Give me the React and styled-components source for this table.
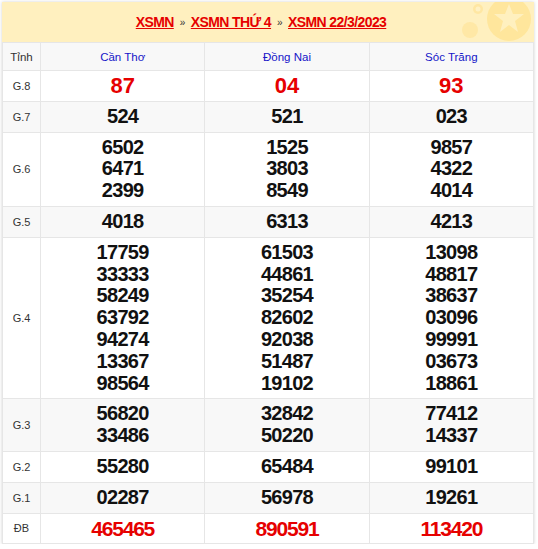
import styled, { createGlobalStyle } from 'styled-components';

const GlobalStyle = createGlobalStyle`
  html, body {
    margin: 0;
    padding: 0;
    background: #ffffff;
    font-family: 'Liberation Sans', Arial, sans-serif;
  }
`;

const Card = styled.div`
  margin: 2px 4px 0 2px;
  width: 532px;
  box-shadow: 0 0 3px rgba(0, 0, 0, 0.18);
  background: #fff;
`;

const Title = styled.div`
  position: relative;
  height: 40px;
  background: #fff0bf;
  display: flex;
  align-items: center;
  justify-content: center;
  padding-right: 14px;
  overflow: hidden;
  font-size: 14px;
  letter-spacing: -0.6px;
  font-weight: 700;
`;

const Crumb = styled.a`
  color: #e60000;
  text-decoration: underline;
`;

const Sep = styled.span`
  color: #333;
  font-size: 10px;
  font-weight: 400;
  margin: 0 6px;
`;

const Deco = styled.svg`
  position: absolute;
  right: 0;
  top: 0;
`;

const Table = styled.table`
  width: 100%;
  border-collapse: collapse;
  table-layout: fixed;
`;

const Row = styled.tr`
  background: ${({ $shade }) => ($shade ? '#f8f8f8' : '#ffffff')};
`;

const Cell = styled.td`
  border: 1px solid #e6e6e6;
  text-align: center;
  vertical-align: middle;
  padding: 4px 0;
  line-height: 21.8px;
  font-size: ${({ $size }) => $size || '20px'};
  letter-spacing: ${({ $spacing }) => $spacing || '-0.7px'};
  font-weight: 700;
  color: ${({ $red }) => ($red ? '#e60000' : '#111')};
`;

const Label = styled.td`
  border: 1px solid #e6e6e6;
  width: 37px;
  text-align: center;
  font-size: 11px;
  color: #333;
  padding: 0;
`;

const HeadCell = styled.th`
  border: 1px solid #e6e6e6;
  height: 27px;
  padding: 0;
  font-size: 11.5px;
  font-weight: 400;
  color: ${({ $blue }) => ($blue ? '#1515c8' : '#333')};
`;

const Num = styled.div``;

const provinces = ['Cần Thơ', 'Đồng Nai', 'Sóc Trăng'];

const rows = [
  { label: 'G.8', size: '22px', spacing: '0', red: true, values: [['87'], ['04'], ['93']] },
  { label: 'G.7', values: [['524'], ['521'], ['023']] },
  {
    label: 'G.6',
    values: [
      ['6502', '6471', '2399'],
      ['1525', '3803', '8549'],
      ['9857', '4322', '4014'],
    ],
  },
  { label: 'G.5', values: [['4018'], ['6313'], ['4213']] },
  {
    label: 'G.4',
    values: [
      ['17759', '33333', '58249', '63792', '94274', '13367', '98564'],
      ['61503', '44861', '35254', '82602', '92038', '51487', '19102'],
      ['13098', '48817', '38637', '03096', '99991', '03673', '18861'],
    ],
  },
  {
    label: 'G.3',
    values: [
      ['56820', '33486'],
      ['32842', '50220'],
      ['77412', '14337'],
    ],
  },
  { label: 'G.2', values: [['55280'], ['65484'], ['99101']] },
  { label: 'G.1', values: [['02287'], ['56978'], ['19261']] },
  {
    label: 'ĐB',
    size: '21px',
    spacing: '-1.2px',
    red: true,
    values: [['465465'], ['890591'], ['113420']],
  },
];

const App = () => (
  <>
    <GlobalStyle />
    <Card>
      <Title>
        <Crumb>XSMN</Crumb>
        <Sep>»</Sep>
        <Crumb>XSMN THỨ 4</Crumb>
        <Sep>»</Sep>
        <Crumb>XSMN 22/3/2023</Crumb>
        <Deco width="140" height="40" viewBox="0 0 140 40">
          <circle cx="115" cy="17" r="22" fill="#ffe69c" />
          <polygon
            points="115,2 119,12 130,12 121,19 124,30 115,23 106,30 109,19 100,12 111,12"
            fill="#fff3c8"
            opacity="0.8"
          />
          <circle cx="84" cy="7" r="5" fill="#ffe7a3" />
          <circle cx="84" cy="7" r="2.5" fill="#fff1c4" />
          <circle cx="76" cy="28" r="8" fill="#ffe8a6" />
        </Deco>
      </Title>
      <Table>
        <thead>
          <Row $shade>
            <HeadCell style={{ width: 37 }}>Tỉnh</HeadCell>
            {provinces.map((p) => (
              <HeadCell key={p} $blue>
                {p}
              </HeadCell>
            ))}
          </Row>
        </thead>
        <tbody>
          {rows.map((r, i) => (
            <Row key={r.label} $shade={i % 2 === 1}>
              <Label>{r.label}</Label>
              {r.values.map((col, j) => (
                <Cell key={j} $size={r.size} $spacing={r.spacing} $red={r.red}>
                  {col.map((n) => (
                    <Num key={n}>{n}</Num>
                  ))}
                </Cell>
              ))}
            </Row>
          ))}
        </tbody>
      </Table>
    </Card>
  </>
);

export default App;
